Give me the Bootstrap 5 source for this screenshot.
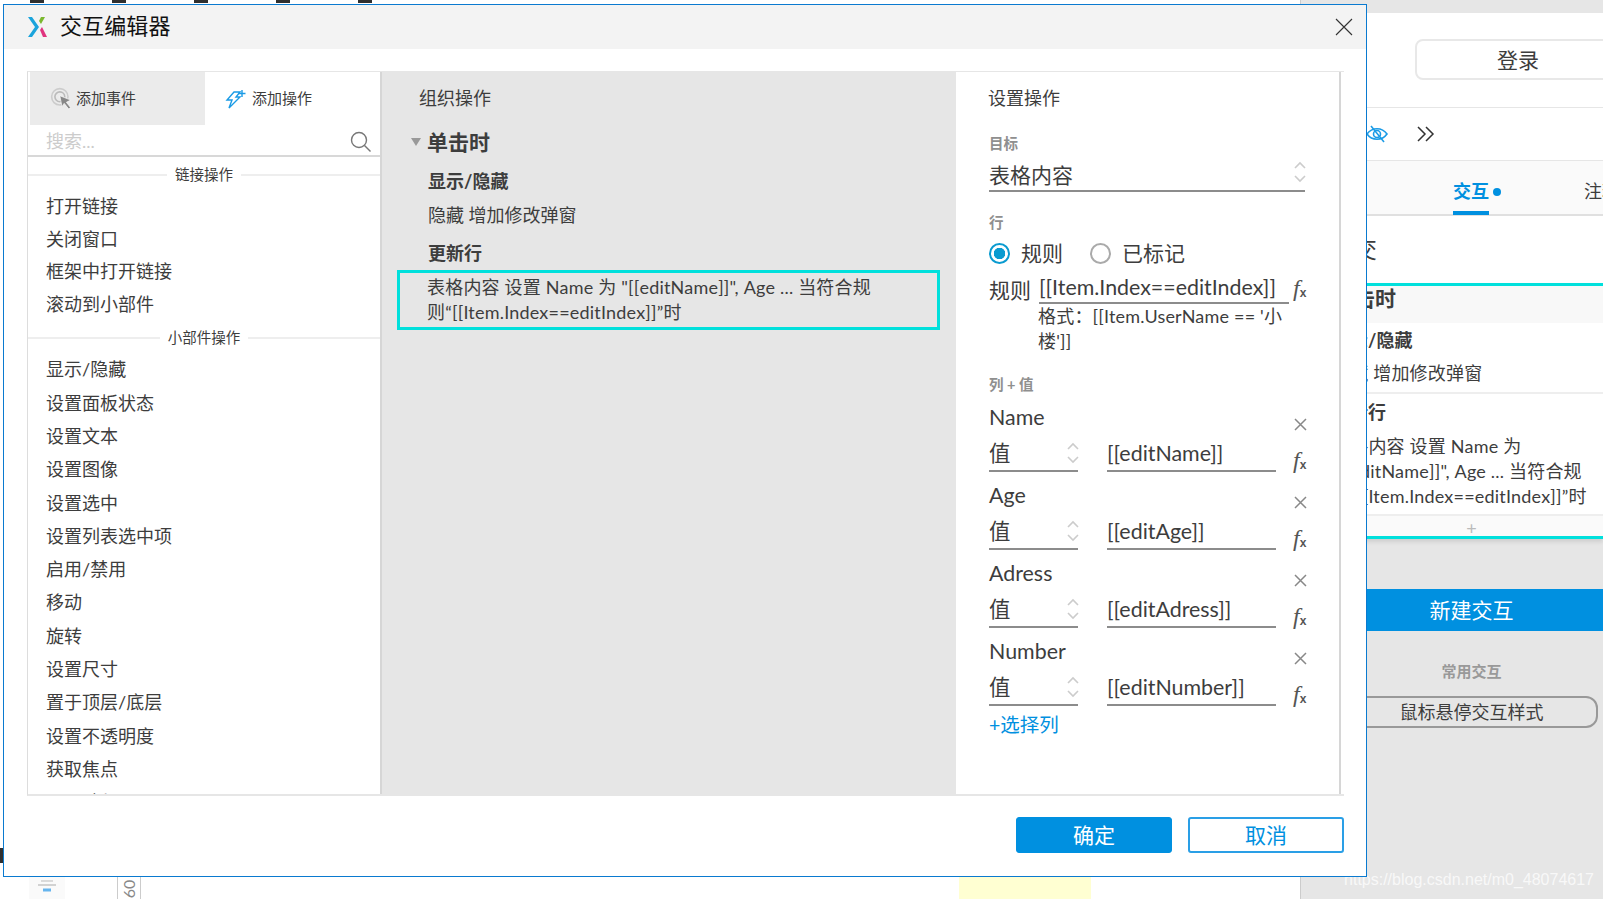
<!DOCTYPE html>
<html lang="zh-CN">
<head>
    <meta charset="UTF-8">
    <meta name="viewport" content="width=device-width, initial-scale=1.0">
    <title>交互编辑器</title>
    <link href="https://cdn.jsdelivr.net/npm/bootstrap@5.3.3/dist/css/bootstrap.min.css" rel="stylesheet">
    <style>
        html, body { height: 100%; }
        body {
            width: 1603px;
            height: 899px;
            overflow: hidden;
            position: relative;
            background: #fff;
            color: #3d3d3d;
            font-family: "Lato", "Noto Sans CJK SC", sans-serif;
            font-size: 18px;
        }

        /* page behind the dialog */
        .back-wrap { width: 1603px; height: 899px; }
        .back-canvas { width: 1300px; }
        .tick-row { height: 12px; padding-left: 30px; gap: 68px; }
        .tick-mark { width: 14px; height: 3px; background: #2f2f2f; }
        .left-dark { width: 3px; height: 15px; background: #2f2f2f; margin-bottom: 13px; }
        .bottom-strip { height: 23px; }
        .mini-icon { width: 36px; margin-left: 29px; background: #fafafa; }
        .ruler-box { width: 24px; margin-left: 52px; border-left: 1px solid #ccc; border-right: 1px solid #ccc; color: #888; font-size: 16px; line-height: 22px; }
        .ruler-num { display: block; transform: rotate(-90deg); text-align: center; margin-top: 2px; }
        .yellow-note { width: 132px; margin-left: 818px; background: #ffffd2; }

        .side-bar { width: 303px; border-left: 1px solid #ccc; background: #e6e6e6; overflow: hidden; }
        .side-top { background: #fff; border-top: 1px solid #e6e6e6; margin-top: 12px; border-bottom: 1px solid #e6e6e6; height: 96px; padding-left: 75px; }
        .side-sep { width: 2px; height: 36px; background: #eee; margin-right: 39px; margin-top: 29px; }
        .login-btn { width: 206px; height: 41px; margin-top: 26px; border: 2px solid #e8e8e8; border-radius: 8px; text-align: center; font-size: 21px; line-height: 38px; flex-shrink: 0; }
        .side-tools { height: 52px; background: #fff; padding-left: 65px; gap: 28px; }
        .side-tabs { height: 56px; background: #fafafa; border-top: 1px solid #e6e6e6; border-bottom: 2px solid #e0e0e0; padding-left: 152px; }
        .tab-on { color: #0090e0; font-weight: 700; height: 54px; width: 36px; line-height: 60px; border-bottom: 4px solid #0090e0; white-space: nowrap; }
        .tab-dot { width: 8px; height: 8px; border-radius: 50%; background: #0090e0; margin: 27px 0 0 4px; flex-shrink: 0; }
        .tab-off { margin-left: 83px; line-height: 60px; white-space: nowrap; }
        .side-title { height: 67px; background: #fff; padding-left: 52px; font-size: 24px; line-height: 66px; }
        .side-case { background: #fff; border-top: 3px solid #00e0dc; border-bottom: 3px solid #00e0dc; box-shadow: 0 3px 4px rgba(0,0,0,.1); }
        .case-head { height: 37px; background: #f8f8f8; padding-left: 32px; font-size: 21px; font-weight: 700; line-height: 23px; white-space: nowrap; }
        .case-group { padding-left: 31px; border-bottom: 2px solid #eee; white-space: nowrap; letter-spacing: .2px; }
        .case-group b { display: block; line-height: 34px; letter-spacing: 0; }
        .case-group-b b { line-height: 36px; }
        .case-line { line-height: 32px; }
        .case-lines { line-height: 25px; margin-top: 4px; }
        .case-plus { height: 20px; background: #fafafa; text-align: center; color: #bbb; line-height: 24px; padding-left: 39px; }
        .new-btn { height: 42px; margin-top: 50px; background: #0090e0; color: #fff; text-align: center; font-size: 21px; line-height: 42px; padding-left: 39px; }
        .common-label { margin-top: 30px; color: #999; font-size: 15px; font-weight: 700; text-align: center; padding-left: 39px; line-height: 20px; }
        .hover-pill { margin: 15px 5px 0 15px; height: 32px; border: 2px solid #999; border-radius: 12px; text-align: center; line-height: 28px; padding-left: 29px; white-space: nowrap; }
        .water-mark { right: 9px; bottom: 9px; color: rgba(255,255,255,.75); font-family: "Liberation Sans", sans-serif; font-size: 16px; line-height: 20px; }

        /* dialog */
        .edit-dialog { left: 3px; top: 4px; width: 1364px; height: 873px; background: #fff; border: 1px solid #0a7ad0; }
        .dialog-head { height: 44px; background: #f3f3f3; padding: 0 13px 0 23px; }
        .dialog-title { margin: 0 0 3px 13px; font-size: 22px; color: #111; letter-spacing: .1px; }
        .panel-frame { margin: 22px 22px 0 23px; height: 725px; border-top: 1px solid #e6e6e6; border-bottom: 2px solid #e6e6e6; border-left: 1px solid #ddd; }

        .pick-panel { width: 354px; border-right: 2px solid #d6d6d6; overflow: hidden; }
        .pick-tabs { height: 53px; padding-left: 2px; font-size: 15px; }
        .pick-tab { width: 175px; padding-left: 20px; gap: 6px; }
        .pick-tab-off { background: #ebebeb; gap: 2px; }
        .pick-search { height: 32px; border-bottom: 2px solid #d8d8d8; padding: 3px 8px 0 18px; color: #ccc; }
        .pick-divider { height: 30px; font-size: 14.5px; gap: 8px; }
        .pick-divider::before, .pick-divider::after { content: ""; flex: 1; border-top: 2px solid #eee; }
        .pick-divider-one { margin-top: 3px; }
        .pick-divider-two { margin-top: 2px; height: 31px; }
        .pick-item { padding-left: 18px; line-height: 33.3px; white-space: nowrap; }
        .pick-tight { line-height: 32.6px; }

        .order-panel { width: 574px; background: #e6e6e6; }
        .order-title { height: 50px; line-height: 52px; padding-left: 37px; }
        .order-case { padding-left: 29px; gap: 6px; height: 40px; margin-bottom: 1px; font-size: 21px; font-weight: 700; }
        .case-arrow { width: 0; height: 0; border-left: 5px solid transparent; border-right: 5px solid transparent; border-top: 8px solid #999; }
        .order-group { padding-left: 46px; font-weight: 700; line-height: 36px; }
        .order-text { padding-left: 46px; line-height: 33px; margin-bottom: 3px; }
        .order-sel { margin: -1px 0 0 15px; width: 543px; height: 60px; border: 3px solid #00e0dc; padding: 2px 0 0 27px; line-height: 25px; letter-spacing: .2px; }

        .set-panel { width: 385px; border-right: 2px solid #d6d6d6; padding-left: 32px; }
        .set-title { height: 52px; line-height: 53px; }
        .grey-label { color: #8f8f8f; font-size: 14.5px; font-weight: 700; line-height: 20px; padding-left: 1px; }
        .target-label { margin-top: 10px; }
        .big-text { font-size: 21.4px; }
        .target-field { width: 316px; height: 38px; margin-left: 1px; border-bottom: 2px solid #8c8c8c; padding-top: 6px; font-size: 21px; }
        .spin-arrows { display: block; margin-right: -2px; margin-top: -6px; }
        .row-label { margin-top: 21px; }
        .radio-row { height: 30px; margin: 5px 0 0 1px; font-size: 21px; }
        .radio-dot.form-check-input { width: 21px; height: 21px; margin: 0 11px 0 0; border: 2px solid #aaa; float: none; background-image: none; flex-shrink: 0; }
        .radio-dot.form-check-input:checked { border-color: #0a9bd0; background-color: #fff; background-image: radial-gradient(circle, #0a9bd0 0 5.5px, transparent 6px); }
        .radio-gap { margin-right: 27px; }
        .rule-row { height: 32px; margin: 4px 0 0 1px; }
        .rule-label { font-size: 21px; padding-top: 2px; }
        .rule-field { width: 250px; height: 32px; margin-left: 8px; border-bottom: 2px solid #8c8c8c; line-height: 30px; white-space: nowrap; }
        .fx-mark { font-family: "Liberation Serif", serif; font-style: italic; font-size: 24px; line-height: 20px; color: #555; white-space: nowrap; }
        .fx-mark sub { font-family: "Liberation Sans", sans-serif; font-style: normal; font-size: 12px; bottom: -1px; font-weight: 700; }
        .rule-fx { margin: 6px 0 0 4px; }
        .rule-hint { width: 250px; margin-left: 50px; line-height: 25px; letter-spacing: .2px; }
        .map-head { margin-top: 21px; }
        .map-row { height: 78px; padding: 5px 0 0 1px; }
        .map-name { height: 34px; line-height: 34px; width: 318px; }
        .map-close { margin-top: 15px; }
        .map-value { height: 38px; }
        .map-select { width: 89px; height: 38px; border-bottom: 2px solid #8c8c8c; line-height: 36px; padding-top: 2px; flex-shrink: 0; }
        .map-select .spin-arrows { margin-top: 0; }
        .map-input { width: 169px; height: 38px; margin-left: 29px; border-bottom: 2px solid #8c8c8c; line-height: 38px; white-space: nowrap; }
        .map-fx { margin: 16px 0 0 17px; }
        .add-col { color: #0090e0; font-size: 19.500px; line-height: 28px; margin: 4px 0 0 1px; }

        .dialog-foot { gap: 16px; padding: 21px 22px 0 0; }
        .btn.foot-btn { width: 156px; height: 36px; padding: 0; border-radius: 3px; font-size: 21px; line-height: 32px; }
        .btn.foot-ok { background: #0090e0; border: 1px solid #0090e0; color: #fff; }
        .btn.foot-cancel { background: #fff; border: 2px solid #2a9fe6; color: #0090e0; }
    </style>
</head>

<body>
    <!-- page behind the dialog -->
    <div class="back-wrap d-flex">
        <div class="back-canvas d-flex flex-column">
            <div class="tick-row d-flex">
                <span class="tick-mark"></span><span class="tick-mark"></span><span class="tick-mark"></span><span class="tick-mark"></span><span class="tick-mark"></span>
            </div>
            <div class="flex-grow-1 d-flex align-items-end"><span class="left-dark"></span></div>
            <div class="bottom-strip d-flex">
                <div class="mini-icon d-flex justify-content-center align-items-center">
                    <svg width="24" height="20" viewBox="0 0 24 20"><path d="M3 7h18" stroke="#aaa" stroke-width="1"/><path d="M6 3h12" stroke="#bbb" stroke-width="1"/><path d="M8 12h8" stroke="#66b5ee" stroke-width="3"/></svg>
                </div>
                <div class="ruler-box"><span class="ruler-num">60</span></div>
                <div class="yellow-note"></div>
            </div>
        </div>

        <div class="side-bar d-flex flex-column flex-shrink-0">
            <div class="side-top d-flex">
                <span class="side-sep"></span>
                <div class="login-btn">登录</div>
            </div>
            <div class="side-tools d-flex align-items-center">
                <svg width="22" height="20" viewBox="0 0 22 20" fill="none" stroke="#1a9be6" stroke-width="1.6"><path d="M1 10c5-7 15-7 20 0c-5 7-15 7-20 0z"/><circle cx="11" cy="10" r="3.5"/><path d="M5 2l13 16"/></svg>
                <svg width="20" height="18" viewBox="0 0 20 18" fill="none" stroke="#333" stroke-width="1.5"><path d="M2 2l7 7l-7 7"/><path d="M10 2l7 7l-7 7"/></svg>
            </div>
            <div class="side-tabs d-flex">
                <div class="tab-on">交互</div><span class="tab-dot"></span>
                <div class="tab-off">注释</div>
            </div>
            <div class="side-title">交</div>
            <div class="side-case">
                <div class="case-head">单击时</div>
                <div class="case-group" style="height:71px"><b>显示/隐藏</b><div class="case-line">隐藏 增加修改弹窗</div></div>
                <div class="case-group case-group-b" style="height:122px"><b>更新行</b><div class="case-lines">表格内容 设置 Name 为<br>"[[editName]]", Age ... 当符合规<br>则“[[Item.Index==editIndex]]”时</div></div>
                <div class="case-plus">+</div>
            </div>
            <div class="new-btn">新建交互</div>
            <div class="common-label">常用交互</div>
            <div class="hover-pill">鼠标悬停交互样式</div>
        </div>
    </div>
    <div class="water-mark position-absolute">https://blog.csdn.net/m0_48074617</div>

    <!-- dialog -->
    <div class="edit-dialog position-absolute">
        <div class="dialog-head d-flex align-items-center">
            <svg width="20" height="22" viewBox="0 0 20 22"><path d="M1 1h4l7 10l-7 10h-4l7-10z" fill="#1ba4dc"/><path d="M14 1h4l-4 7l-2-3z" fill="#7ab82e"/><path d="M13 14l2-3l5 10h-4z" fill="#e0337e"/></svg>
            <div class="dialog-title">交互编辑器</div>
            <svg class="ms-auto" width="18" height="18" viewBox="0 0 18 18" stroke="#333" stroke-width="1.1"><path d="M1 1l16 16M17 1L1 17"/></svg>
        </div>

        <div class="panel-frame d-flex">
            <div class="pick-panel flex-shrink-0">
                <div class="pick-tabs d-flex">
                    <div class="pick-tab pick-tab-off d-flex align-items-center">
                        <svg width="24" height="24" viewBox="0 0 22 22" fill="none"><circle cx="9" cy="9" r="7.5" stroke="#ccc" stroke-width="1.5"/><circle cx="9" cy="9" r="4.5" stroke="#bbb" stroke-width="1.5"/><path d="M9 8l10 4l-4 2l4 5l-2 1l-4-5l-2 3z" fill="#888" stroke="#fff" stroke-width=".6"/></svg>
                        添加事件
                    </div>
                    <div class="pick-tab d-flex align-items-center">
                        <svg width="21" height="20" viewBox="0 0 21 20" fill="none" stroke="#1a9be6" stroke-width="1.4"><path d="M9 3h6l-4 5h4L4 19l3-8H2z"/><path d="M17 1v7M13.5 4.500h7"/></svg>
                        添加操作
                    </div>
                </div>
                <div class="pick-search d-flex justify-content-between align-items-center">
                    <span>搜索...</span>
                    <svg width="22" height="22" viewBox="0 0 22 22" fill="none" stroke="#777" stroke-width="1.4"><circle cx="9" cy="9" r="7.500"/><path d="M14.500 14.500l6 6"/></svg>
                </div>
                <div class="pick-divider pick-divider-one d-flex align-items-center">链接操作</div>
                <div class="pick-item pick-tight">打开链接</div>
                <div class="pick-item pick-tight">关闭窗口</div>
                <div class="pick-item pick-tight">框架中打开链接</div>
                <div class="pick-item pick-tight">滚动到小部件</div>
                <div class="pick-divider pick-divider-two d-flex align-items-center">小部件操作</div>
                <div class="pick-item">显示/隐藏</div>
                <div class="pick-item">设置面板状态</div>
                <div class="pick-item">设置文本</div>
                <div class="pick-item">设置图像</div>
                <div class="pick-item">设置选中</div>
                <div class="pick-item">设置列表选中项</div>
                <div class="pick-item">启用/禁用</div>
                <div class="pick-item">移动</div>
                <div class="pick-item">旋转</div>
                <div class="pick-item">设置尺寸</div>
                <div class="pick-item">置于顶层/底层</div>
                <div class="pick-item">设置不透明度</div>
                <div class="pick-item">获取焦点</div>
                <div class="pick-item">展开/折叠</div>
            </div>

            <div class="order-panel flex-shrink-0">
                <div class="order-title">组织操作</div>
                <div class="order-case d-flex align-items-center"><span class="case-arrow"></span>单击时</div>
                <div class="order-group">显示/隐藏</div>
                <div class="order-text">隐藏 增加修改弹窗</div>
                <div class="order-group">更新行</div>
                <div class="order-sel">表格内容 设置 Name 为 "[[editName]]", Age ... 当符合规<br>则“[[Item.Index==editIndex]]”时</div>
            </div>

            <div class="set-panel flex-shrink-0">
                <div class="set-title">设置操作</div>
                <div class="grey-label target-label">目标</div>
                <div class="target-field d-flex justify-content-between align-items-center">
                    <span>表格内容</span>
                    <svg class="spin-arrows" width="14" height="22" viewBox="0 0 14 22" fill="none" stroke="#ccc" stroke-width="1.6"><path d="M2 7l5-5l5 5"/><path d="M2 15l5 5l5-5"/></svg>
                </div>
                <div class="grey-label row-label">行</div>
                <div class="radio-row d-flex align-items-center">
                    <input class="form-check-input radio-dot" type="radio" name="rowMode" checked>
                    <span class="radio-gap">规则</span>
                    <input class="form-check-input radio-dot" type="radio" name="rowMode">
                    <span>已标记</span>
                </div>
                <div class="rule-row big-text d-flex">
                    <span class="rule-label">规则</span>
                    <div class="rule-field">[[Item.Index==editIndex]]</div>
                    <span class="fx-mark rule-fx">f<sub>x</sub></span>
                </div>
                <div class="rule-hint">格式：[[Item.UserName == '小楼']]</div>
                <div class="grey-label map-head">列 + 值</div>

                <div class="map-row big-text">
                    <div class="map-name d-flex justify-content-between align-items-center"><span>Name</span><svg class="map-close" width="13" height="13" viewBox="0 0 13 13" stroke="#888" stroke-width="1.5"><path d="M1 1l11 11M12 1L1 12"/></svg></div>
                    <div class="map-value d-flex">
                        <div class="map-select d-flex justify-content-between align-items-center"><span>值</span><svg class="spin-arrows" width="14" height="22" viewBox="0 0 14 22" fill="none" stroke="#ccc" stroke-width="1.6"><path d="M2 7l5-5l5 5"/><path d="M2 15l5 5l5-5"/></svg></div>
                        <div class="map-input">[[editName]]</div>
                        <span class="fx-mark map-fx">f<sub>x</sub></span>
                    </div>
                </div>
                <div class="map-row big-text">
                    <div class="map-name d-flex justify-content-between align-items-center"><span>Age</span><svg class="map-close" width="13" height="13" viewBox="0 0 13 13" stroke="#888" stroke-width="1.5"><path d="M1 1l11 11M12 1L1 12"/></svg></div>
                    <div class="map-value d-flex">
                        <div class="map-select d-flex justify-content-between align-items-center"><span>值</span><svg class="spin-arrows" width="14" height="22" viewBox="0 0 14 22" fill="none" stroke="#ccc" stroke-width="1.6"><path d="M2 7l5-5l5 5"/><path d="M2 15l5 5l5-5"/></svg></div>
                        <div class="map-input">[[editAge]]</div>
                        <span class="fx-mark map-fx">f<sub>x</sub></span>
                    </div>
                </div>
                <div class="map-row big-text">
                    <div class="map-name d-flex justify-content-between align-items-center"><span>Adress</span><svg class="map-close" width="13" height="13" viewBox="0 0 13 13" stroke="#888" stroke-width="1.5"><path d="M1 1l11 11M12 1L1 12"/></svg></div>
                    <div class="map-value d-flex">
                        <div class="map-select d-flex justify-content-between align-items-center"><span>值</span><svg class="spin-arrows" width="14" height="22" viewBox="0 0 14 22" fill="none" stroke="#ccc" stroke-width="1.6"><path d="M2 7l5-5l5 5"/><path d="M2 15l5 5l5-5"/></svg></div>
                        <div class="map-input">[[editAdress]]</div>
                        <span class="fx-mark map-fx">f<sub>x</sub></span>
                    </div>
                </div>
                <div class="map-row big-text">
                    <div class="map-name d-flex justify-content-between align-items-center"><span>Number</span><svg class="map-close" width="13" height="13" viewBox="0 0 13 13" stroke="#888" stroke-width="1.5"><path d="M1 1l11 11M12 1L1 12"/></svg></div>
                    <div class="map-value d-flex">
                        <div class="map-select d-flex justify-content-between align-items-center"><span>值</span><svg class="spin-arrows" width="14" height="22" viewBox="0 0 14 22" fill="none" stroke="#ccc" stroke-width="1.6"><path d="M2 7l5-5l5 5"/><path d="M2 15l5 5l5-5"/></svg></div>
                        <div class="map-input">[[editNumber]]</div>
                        <span class="fx-mark map-fx">f<sub>x</sub></span>
                    </div>
                </div>
                <div class="add-col">+选择列</div>
            </div>
        </div>

        <div class="dialog-foot d-flex justify-content-end">
            <button type="button" class="btn foot-btn foot-ok">确定</button>
            <button type="button" class="btn foot-btn foot-cancel">取消</button>
        </div>
    </div>
</body>
</html>
